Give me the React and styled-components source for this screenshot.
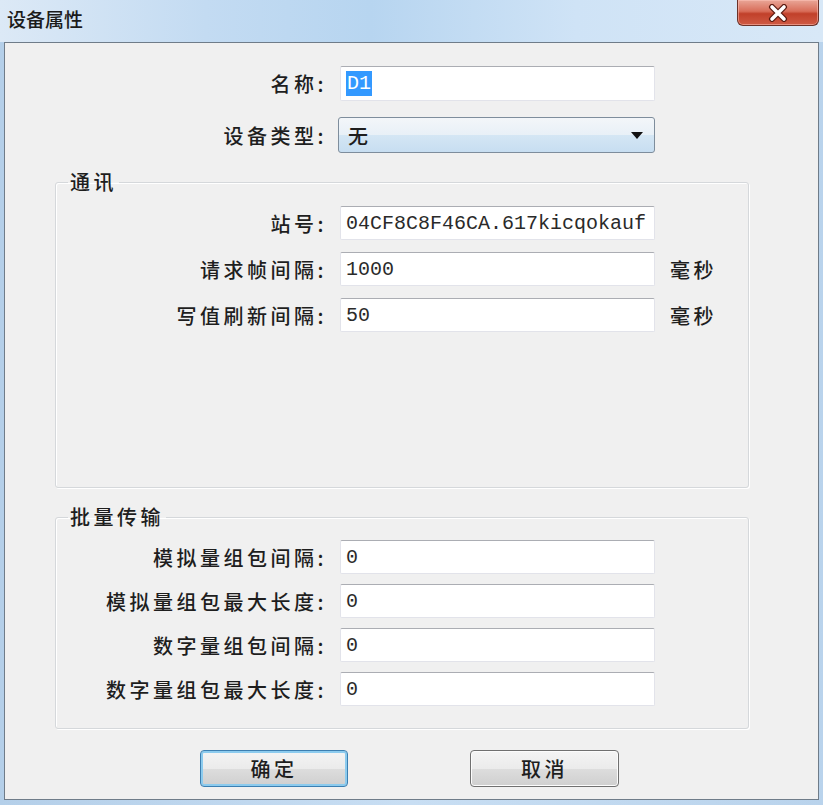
import styled, { createGlobalStyle } from 'styled-components';

const Global = createGlobalStyle`
  html, body { margin: 0; padding: 0; }
  body {
    width: 823px;
    height: 805px;
    overflow: hidden;
    background: linear-gradient(to right, #b4cfe9, #c8def3 50%, #b9d3ec);
    font-family: "Noto Sans CJK SC", "Noto Sans", sans-serif;
  }
`;

const Window = styled.div`
  display: flex;
  flex-direction: column;
  width: 823px;
  height: 805px;
`;

const TitleBar = styled.div`
  height: 42px;
  display: flex;
  align-items: flex-start;
  justify-content: space-between;
  background: linear-gradient(to right, #dce9f6 0%, #c3dbf2 25%, #b7d5f0 45%, #cfe3f6 70%, #d8e8f7 100%);
`;

const Title = styled.div`
  margin: 8px 0 0 7px;
  font-size: 19px;
  line-height: 22px;
  font-weight: 500;
  color: #1b1b1b;
`;

const CloseBtn = styled.div`
  width: 80px;
  height: 25px;
  margin-right: 4px;
  display: flex;
  align-items: center;
  justify-content: center;
  border: 1px solid #6b3128;
  border-top: none;
  border-radius: 0 0 6px 6px;
  background: linear-gradient(to bottom, #e9a697 0%, #d86d59 45%, #c1402a 55%, #cf5a44 100%);
  box-shadow: inset 0 0 0 1px rgba(255, 200, 190, 0.5);
`;

const Client = styled.div`
  margin-left: 4px;
  width: 815px;
  height: 758px;
  box-sizing: border-box;
  border: 1px solid #6f7c89;
  background: #f0f0f0;
  padding-top: 23px;
  display: flex;
  flex-direction: column;
`;

const Row = styled.div`
  display: flex;
  align-items: center;
  height: ${p => p.$h || 34}px;
  margin-bottom: ${p => p.$mb || 0}px;
`;

const Label = styled.div`
  width: ${p => p.$w}px;
  padding-right: 13px;
  text-align: right;
  font-size: 20px;
  font-weight: 500;
  letter-spacing: 3.5px;
  color: #1e1e1e;
  white-space: nowrap;
`;

const TextBox = styled.div`
  width: 315px;
  height: 100%;
  box-sizing: border-box;
  display: flex;
  align-items: center;
  padding-left: 5px;
  background: #fff;
  border: 1px solid #e2e3ea;
  border-top-color: #abadb3;
  border-radius: 2px;
  font-family: "Liberation Mono", "DejaVu Sans Mono", monospace;
  font-size: 20px;
  color: #2a2a2a;
  overflow: hidden;
  white-space: nowrap;
`;

const Selected = styled.span`
  background: #3399ff;
  color: #fff;
  padding: 1px 1px;
`;

const Select = styled.div`
  width: 317px;
  height: 100%;
  margin-left: -2px;
  box-sizing: border-box;
  display: flex;
  align-items: center;
  justify-content: space-between;
  padding: 0 11px 0 9px;
  border: 1px solid #7e8d9c;
  border-radius: 3px;
  background: linear-gradient(to bottom, #f3f6f9 0%, #e8f0f7 50%, #d4e6f4 51%, #c7def1 100%);
  font-size: 20px;
  font-weight: 500;
  color: #1e1e1e;
`;

const Unit = styled.div`
  margin-left: 15px;
  font-size: 20px;
  font-weight: 500;
  letter-spacing: 3.5px;
  color: #1e1e1e;
`;

const Group = styled.fieldset`
  margin: ${p => p.$mt}px 0 0 50px;
  width: 694px;
  box-sizing: border-box;
  padding: ${p => p.$pt}px 0 ${p => p.$pb}px 0;
  border: 1px solid #d5d8db;
  border-radius: 3px;
  box-shadow: inset 1px 1px 0 #fff, 1px 1px 0 #fff;
  display: flex;
  flex-direction: column;
  gap: ${p => p.$gap}px;
`;

const Legend = styled.legend`
  margin-left: 12px;
  padding: 0 2px;
  font-size: 20px;
  font-weight: 500;
  line-height: 22px;
  letter-spacing: 3.5px;
  color: #1e1e1e;
`;

const Buttons = styled.div`
  display: flex;
  gap: 122px;
  margin-top: 21px;
  padding-left: 195px;
`;

const Button = styled.div`
  width: ${p => p.$w}px;
  height: 37px;
  box-sizing: border-box;
  display: flex;
  align-items: center;
  justify-content: center;
  border: 1px solid ${p => (p.$default ? '#3c7fb1' : '#707070')};
  border-radius: 4px;
  background: linear-gradient(to bottom, #f4f4f4 0%, #ebebeb 50%, #dddddd 51%, #cfcfcf 100%);
  box-shadow: ${p => (p.$default ? 'inset 0 0 0 2px #8ccbee' : 'inset 0 0 0 1px #fcfcfc')};
  font-size: 20px;
  font-weight: 500;
  letter-spacing: 3.5px;
  color: #1e1e1e;
`;

const comm = [
  { label: '站号:', value: '04CF8C8F46CA.617kicqokauf' },
  { label: '请求帧间隔:', value: '1000', unit: '毫秒' },
  { label: '写值刷新间隔:', value: '50', unit: '毫秒' },
];

const batch = ['模拟量组包间隔:', '模拟量组包最大长度:', '数字量组包间隔:', '数字量组包最大长度:'];

export default function App() {
  return (
    <Window>
      <Global />
      <TitleBar>
        <Title>设备属性</Title>
        <CloseBtn>
          <svg width="22" height="18" viewBox="0 0 22 18">
            <path d="M5 3 L17 15 M17 3 L5 15" stroke="#5a1a10" strokeWidth="6" strokeLinecap="round" />
            <path d="M5 3 L17 15 M17 3 L5 15" stroke="#fff" strokeWidth="3.6" strokeLinecap="round" />
          </svg>
        </CloseBtn>
      </TitleBar>
      <Client>
        <Row $h={35} $mb={16}>
          <Label $w={322}>名称:</Label>
          <TextBox><Selected>D1</Selected></TextBox>
        </Row>
        <Row $h={36}>
          <Label $w={322}>设备类型:</Label>
          <Select>
            <span>无</span>
            <svg width="12" height="7" viewBox="0 0 12 7">
              <polygon points="0,0 12,0 6,7" fill="#111" />
            </svg>
          </Select>
        </Row>

        <Group $mt={18} $pt={13} $pb={155} $gap={12}>
          <Legend>通讯</Legend>
          {comm.map(r => (
            <Row key={r.label}>
              <Label $w={271}>{r.label}</Label>
              <TextBox>{r.value}</TextBox>
              {r.unit && <Unit>{r.unit}</Unit>}
            </Row>
          ))}
        </Group>

        <Group $mt={18} $pt={12} $pb={22} $gap={10}>
          <Legend>批量传输</Legend>
          {batch.map(l => (
            <Row key={l}>
              <Label $w={271}>{l}</Label>
              <TextBox>0</TextBox>
            </Row>
          ))}
        </Group>

        <Buttons>
          <Button $w={148} $default>确定</Button>
          <Button $w={149}>取消</Button>
        </Buttons>
      </Client>
    </Window>
  );
}
